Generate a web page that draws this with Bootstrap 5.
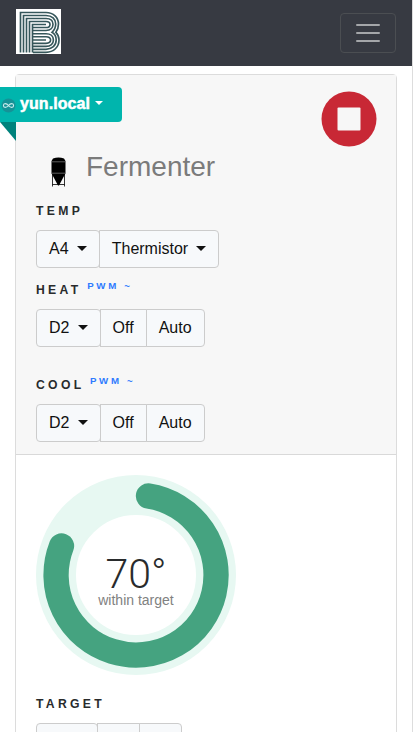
<!DOCTYPE html>
<html lang="en">
<head>
<meta charset="utf-8">
<meta name="viewport" content="width=device-width, initial-scale=1">
<title>Fermenter</title>
<link href="https://cdn.jsdelivr.net/npm/bootstrap@5.3.0/dist/css/bootstrap.min.css" rel="stylesheet">
<style>
body{font-family:"Liberation Sans",Arial,sans-serif;color:#292b2c;height:732px;overflow:hidden}
.page-shell{height:732px;overflow:hidden;border-right:1px solid #ddd}
.top-bar{background:#373a42;height:66px}
.top-bar .navbar-toggler{border:1px solid #4b4e52;border-radius:4px}
.brand-mark{margin-top:-3px}
.control-card{border-color:#dcdcdc;border-radius:4px;margin:8px 15px 0}
.control-head{background:#f7f7f7;border-color:#d9d9d9;height:380px;padding:0 20px}
.control-body{padding:20px}
.ribbon{left:-16px;top:12px;width:122px;height:35px;background:#00b5ad;border-radius:0 4px 4px 0;color:#fff;font-weight:700;line-height:35px}
.ribbon::after{content:"";position:absolute;left:0;top:35px;border-top:19px solid #00827c;border-left:16px solid transparent}
.ribbon .dropdown-toggle{-webkit-text-stroke:.5px #fff;letter-spacing:.08px;margin-top:-2px}
.dropdown-toggle::after{border-top-width:5px;border-left-width:5px;border-right-width:5px;margin-left:3.700px;vertical-align:3.500px}
.ribbon .dropdown-toggle::after{vertical-align:4.500px;margin-left:0;border-top-width:4.500px;border-left-width:4.500px;border-right-width:4.500px}
.stop-btn{padding-top:16px;height:74px;margin-right:-1px}
.vessel-title{font-size:28px;line-height:35px;margin-top:-.5px;color:#7b7b7b}
.field-label{font-size:12.200px;font-weight:700;letter-spacing:3.300px;line-height:18px;height:18px;margin:13px 0 10px}
.label-first{margin-top:7px}
.label-spaced{margin-top:29px}
.label-body{margin-top:20px}
.field-label sup{font-size:9.700px;letter-spacing:2.700px;color:#2f7bff;top:-5px;vertical-align:baseline;line-height:0;margin-left:-1px}
.btn-port{--bs-btn-color:#111;--bs-btn-bg:#f7f9fb;--bs-btn-border-color:#ccc;border-radius:4px;line-height:24px}
.btn-group.stepper .btn{width:43px;flex:none}
.btn-group.stepper .btn:first-child{width:62px;padding-left:8px;padding-right:8px}
.gauge{width:200px;height:200px}
.gauge-text{padding-top:6px}
.reading{font-family:Roboto,"Liberation Sans",sans-serif;font-weight:300;font-size:41px;line-height:46px;margin-bottom:-5px;padding-top:3px}
.reading-note{font-size:14px;line-height:16px;color:#818181}
</style>
<script src="https://cdn.jsdelivr.net/npm/bootstrap@5.3.0/dist/js/bootstrap.bundle.min.js"></script>
</head>
<body>
<div class="page-shell">
<nav class="navbar navbar-dark top-bar p-0">
<div class="w-100 d-flex justify-content-between align-items-center px-3">
<a href="#" class="brand-mark d-block lh-1" aria-label="Home"><svg class="d-block" width="45" height="45" viewBox="0 0 45 45"><path fill="#fff" d="M0 0h45v45H0z"/><g fill="none" stroke="#36575b" stroke-width="1.65"><path d="M4.500 43.500V3.500H30C37.500 3.500 42.500 8.500 42.500 15c0 3.500-1 6-2.600 8.300 2 2 3.100 4.500 3.100 7.700 0 7-5.300 12.300-13 12.300H17"/><path d="M7.500 43.500V6.500H30c6 0 9.700 3.500 9.700 8.500 0 4-1.600 6.300-3.700 8.300 2.700 1.500 4.200 4.100 4.200 7.700 0 5.500-4.200 9.300-10.200 9.300H17"/><path d="M10.500 43.500V9.500H30c4.500 0 7 2.300 7 5.800S34.500 21.500 30 21.500H17M17 24.700h13c4.500 0 7.400 2.500 7.400 6.300s-2.900 6.300-7.400 6.300H17"/><path d="M13.500 43.500V12.500H30c2.700 0 4 1 4 2.900S32.700 18.500 30 18.500H17M17 27.700h13c3 0 4.600 1.200 4.600 3.400s-1.600 3.300-4.600 3.300H17"/><path d="M16.500 43.500V15.500H30M17 31h13"/></g></svg></a>
<button class="navbar-toggler" type="button" aria-label="Toggle navigation"><span class="navbar-toggler-icon"></span></button>
</div>
</nav>
<main class="card control-card">
<div class="ribbon position-absolute d-flex align-items-center"><svg class="me-1 flex-shrink-0" width="16" height="16" viewBox="0 0 16 16"><circle cx="8.500" cy="8.500" r="7" fill="#159297"/><path d="M8.500 8.500C6.500 5.900 3.400 6 3.400 8.500s3.100 2.600 5.100 0 5.100-2.500 5.100 0-3.100 2.600-5.100 0z" fill="none" stroke="#c8ecec" stroke-width="1.100"/></svg><span class="dropdown-toggle">yun.local </span></div>
<div class="card-header control-head">
<div class="stop-btn d-flex justify-content-end"><svg width="56" height="56" viewBox="0 0 56 56"><circle cx="28" cy="28" r="27.500" fill="#c82835"/><rect x="16.500" y="16.500" width="23" height="23" rx="1" fill="#f7f7f7"/></svg></div>
<div class="d-flex">
<svg width="50" height="46" viewBox="0 0 50 46"><path d="M17 9.500q5.500-2 11 0l1.500 2.500v12.500l-1.200 2L23 36.500h-1L16.700 26.500l-1.200-2V12z" fill="#000"/><path d="M15.500 12.800h14M15.500 24.200h14" stroke="#888" stroke-width=".7"/><path d="M16.500 25v12.500M28.500 25v12.500M16.500 35.500h12" stroke="#000" stroke-width=".8" fill="none"/></svg>
<div class="vessel-title">Fermenter</div>
</div>
<div class="field-label label-first">TEMP</div>
<div class="btn-group"><button class="btn btn-port dropdown-toggle">A4 </button><button class="btn btn-port dropdown-toggle">Thermistor </button></div>
<div class="field-label">HEAT <sup>PWM ~</sup></div>
<div class="btn-group"><button class="btn btn-port dropdown-toggle">D2 </button><button class="btn btn-port">Off</button><button class="btn btn-port">Auto</button></div>
<div class="field-label label-spaced">COOL <sup>PWM ~</sup></div>
<div class="btn-group"><button class="btn btn-port dropdown-toggle">D2 </button><button class="btn btn-port">Off</button><button class="btn btn-port">Auto</button></div>
</div>
<div class="card-body control-body">
<div class="gauge position-relative">
<svg class="d-block" width="200" height="200" viewBox="0 0 200 200"><circle cx="100" cy="100" r="80" fill="none" stroke="#e7f8f2" stroke-width="40"/><path d="M112.500 21A80 80 0 1 1 25.500 71" fill="none" stroke="#45a380" stroke-width="25.300" stroke-linecap="round"/></svg>
<div class="gauge-text position-absolute top-50 start-50 translate-middle text-center text-nowrap"><div class="reading">70°</div><div class="reading-note">within target</div></div>
</div>
<div class="field-label label-body">TARGET</div>
<div class="btn-group stepper"><button class="btn btn-port dropdown-toggle" aria-label="Target temperature"></button><button class="btn btn-port" aria-label="Decrease">&nbsp;</button><button class="btn btn-port" aria-label="Increase">&nbsp;</button></div>
</div>
</main>
</div>
</body>
</html>
